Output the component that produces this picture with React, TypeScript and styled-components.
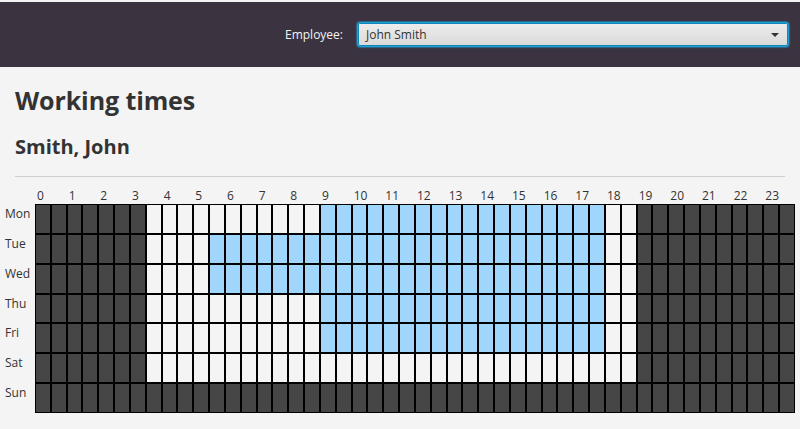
import React from "react";
import styled, { createGlobalStyle } from "styled-components";

const Global = createGlobalStyle`
  html, body { margin: 0; padding: 0; background: #f4f4f4; }
  body { font-family: "Open Sans", "Noto Sans", sans-serif; color: #333; }
`;

const Page = styled.div`
  width: 800px;
  height: 429px;
  overflow: hidden;
  padding-top: 2px;
  box-sizing: border-box;
`;

const Header = styled.header`
  height: 65px;
  background: #3b3340;
  display: flex;
  align-items: center;
  justify-content: flex-end;
  gap: 14px;
  padding-right: 11px;
`;

const Label = styled.span`
  color: #f2f2f2;
  font-size: 12px;
`;

const Select = styled.div`
  width: 432px;
  height: 25px;
  box-sizing: border-box;
  border: 1px solid #1e9fd6;
  box-shadow: 0 0 0 1px #0f86b8 inset, 0 0 1px 1px rgba(30, 159, 214, 0.5);
  border-radius: 3px;
  background: linear-gradient(#eeeeee, #d9d9d9);
  display: flex;
  align-items: center;
  justify-content: space-between;
  padding: 0 9px 0 8px;
  font-size: 12px;
  color: #333;
`;

const Arrow = styled.span`
  width: 0;
  height: 0;
  border-left: 4px solid transparent;
  border-right: 4px solid transparent;
  border-top: 4px solid #333;
`;

const Content = styled.main`
  padding: 0 15px;
`;

const Title = styled.h1`
  margin: 17px 0 0;
  font-size: 25px;
  font-weight: 700;
  line-height: 32px;
  color: #333;
  letter-spacing: -0.1px;
`;

const Subtitle = styled.h2`
  margin: 18px 0 0;
  font-size: 20px;
  font-weight: 700;
  line-height: 26px;
  color: #333;
`;

const Separator = styled.hr`
  margin: 16px 0 0;
  border: none;
  border-top: 1px solid #cfcfcf;
`;

const Schedule = styled.section`
  display: grid;
  grid-template-columns: 30px 760px;
  grid-template-rows: 17px 209px;
  margin: 10px 0 0 -10px;
`;

const Corner = styled.div``;

const HourRow = styled.div`
  display: grid;
  grid-template-columns: repeat(24, 1fr);
  padding: 0 1px;
  column-gap: 2px;
  align-items: end;
`;

const Hour = styled.span`
  font-size: 12px;
  line-height: 16px;
  padding-left: 1px;
  color: #333;
`;

const DayCol = styled.div`
  display: grid;
  grid-template-rows: repeat(7, 1fr);
  padding: 1px 0;
  row-gap: 2px;
`;

const Day = styled.span`
  font-size: 12px;
  line-height: 16px;
  padding-top: 1px;
  color: #333;
`;

const Cells = styled.div`
  display: grid;
  grid-template-columns: repeat(48, 1fr);
  grid-template-rows: repeat(7, 1fr);
  gap: 2px;
  padding: 1px;
  background: #000;
`;

type Kind = "off" | "free" | "work";

const Cell = styled.div<{ $kind: Kind }>`
  background: ${(p) =>
    p.$kind === "off" ? "#464646" : p.$kind === "work" ? "#a0d6fb" : "#f4f4f4"};
`;

const days = ["Mon", "Tue", "Wed", "Thu", "Fri", "Sat", "Sun"];
// [workStart, workEnd) in half-hour cells; free from 7 to 38
const work: Array<[number, number] | null> = [
  [18, 36],
  [11, 36],
  [11, 36],
  [18, 36],
  [18, 36],
  null,
  null,
];

function kindFor(day: number, cell: number): Kind {
  if (day === 6) return "off";
  if (cell < 7 || cell >= 38) return "off";
  const w = work[day];
  if (w && cell >= w[0] && cell < w[1]) return "work";
  return "free";
}

export default function App() {
  return (
    <Page>
      <Global />
      <Header>
        <Label>Employee:</Label>
        <Select>
          <span>John Smith</span>
          <Arrow />
        </Select>
      </Header>
      <Content>
        <Title>Working times</Title>
        <Subtitle>Smith, John</Subtitle>
        <Separator />
        <Schedule>
          <Corner />
          <HourRow>
            {Array.from({ length: 24 }, (_, h) => (
              <Hour key={h}>{h}</Hour>
            ))}
          </HourRow>
          <DayCol>
            {days.map((d) => (
              <Day key={d}>{d}</Day>
            ))}
          </DayCol>
          <Cells>
            {days.map((_, di) =>
              Array.from({ length: 48 }, (_, ci) => (
                <Cell key={`${di}-${ci}`} $kind={kindFor(di, ci)} />
              ))
            )}
          </Cells>
        </Schedule>
      </Content>
    </Page>
  );
}
